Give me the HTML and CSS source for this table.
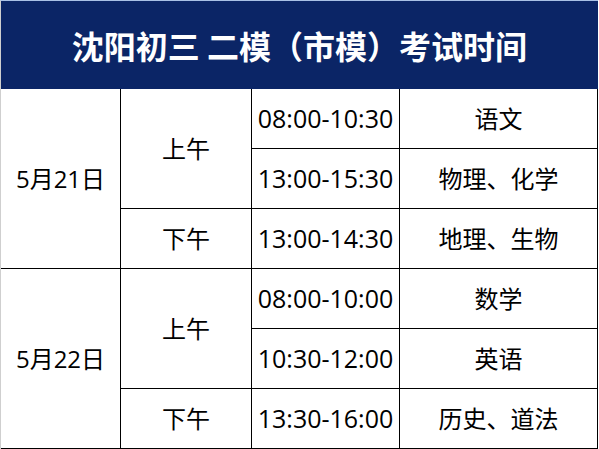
FILE: index.html
```html
<!DOCTYPE html>
<html lang="zh">
<head>
<meta charset="utf-8">
<title>沈阳初三 二模（市模）考试时间</title>
<link rel="stylesheet" href="styles.css">
</head>
<body>
<div class="sheet">
  <div class="title">沈阳初三 二模（市模）考试时间</div>

  <div class="cell date">5月21日</div>
  <div class="cell span2">上午</div>
  <div class="cell time">08:00-10:30</div>
  <div class="cell">语文</div>
  <div class="cell time">13:00-15:30</div>
  <div class="cell">物理、化学</div>
  <div class="cell">下午</div>
  <div class="cell time">13:00-14:30</div>
  <div class="cell">地理、生物</div>

  <div class="cell date">5月22日</div>
  <div class="cell span2">上午</div>
  <div class="cell time">08:00-10:00</div>
  <div class="cell">数学</div>
  <div class="cell time">10:30-12:00</div>
  <div class="cell">英语</div>
  <div class="cell">下午</div>
  <div class="cell time">13:30-16:00</div>
  <div class="cell">历史、道法</div>
</div>
</body>
</html>
```

FILE: styles.css
```css
html, body {
  margin: 0;
  padding: 0;
  background: #ffffff;
}

body {
  font-family: "Open Sans", "Noto Sans CJK SC", sans-serif;
  color: #000000;
}

.sheet {
  width: 598px;
  box-sizing: border-box;
  border-left: 1px solid #cfcfcf;
  border-top: 1px solid #a9c1e6;
  display: grid;
  grid-template-columns: 120px 131px 148px 198px;
  grid-template-rows: 88px repeat(6, 60px);
}

.title {
  grid-column: 1 / -1;
  background: #0b2566;
  color: #ffffff;
  font-family: "Noto Sans CJK SC", sans-serif;
  font-weight: 700;
  font-size: 32px;
  display: flex;
  align-items: center;
  justify-content: center;
  line-height: 1;
}

.cell {
  box-sizing: border-box;
  border-right: 1px solid #000000;
  border-bottom: 1px solid #000000;
  display: flex;
  align-items: center;
  justify-content: center;
  font-size: 24px;
  line-height: 1;
  white-space: nowrap;
}

.time {
  font-size: 25px;
}

.date {
  grid-row: span 3;
}

.span2 {
  grid-row: span 2;
}
```
